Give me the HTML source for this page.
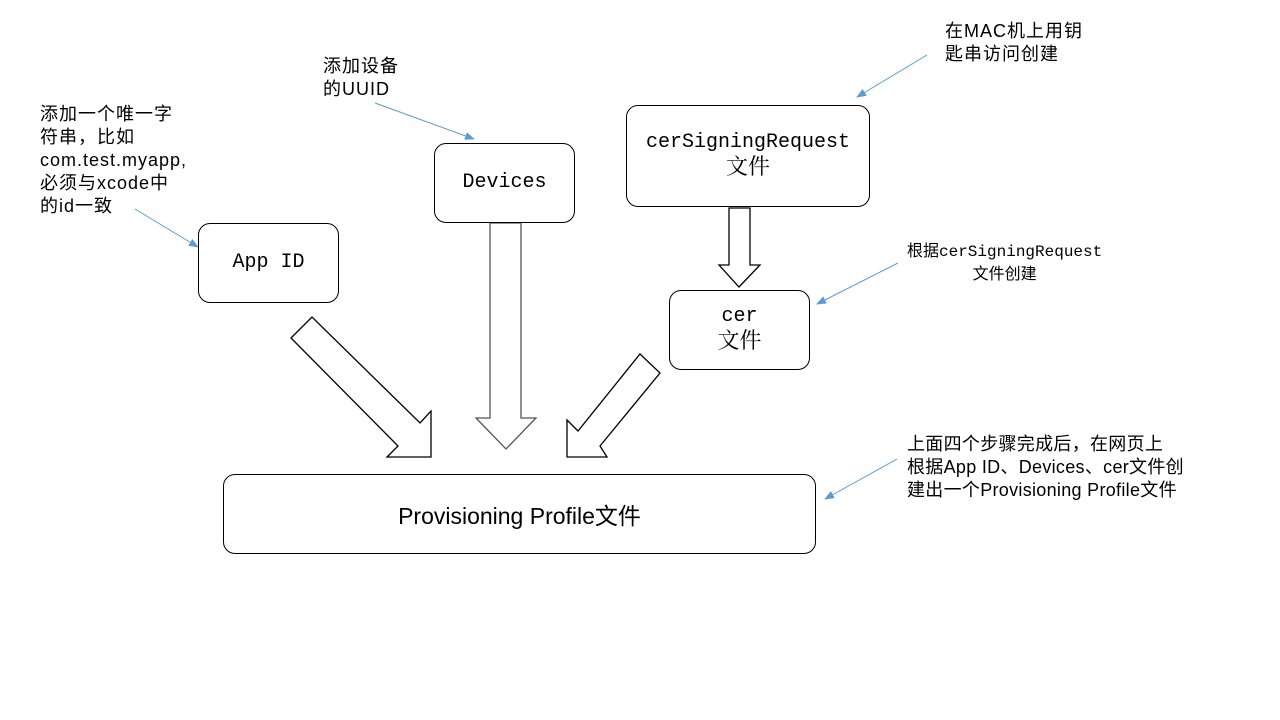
<!DOCTYPE html>
<html><head><meta charset="utf-8"><style>
body{margin:0;width:1280px;height:720px;background:#fff;position:relative;overflow:hidden}
.t{position:absolute;font:18px/23px "Liberation Sans","Noto Sans CJK SC",sans-serif;letter-spacing:1px;color:#000;white-space:nowrap}
.m{position:absolute;font:20px/26px "Liberation Mono","Noto Serif CJK SC",monospace;color:#000;text-align:center;white-space:nowrap}
.m .c{font-size:22px}
.b{position:absolute;border:1px solid #000;border-radius:12px;box-sizing:border-box;display:flex;align-items:center;justify-content:center;flex-direction:column}
</style></head><body>
<svg width="1280" height="720" style="position:absolute;left:0;top:0">
<defs><marker id="a" markerWidth="10" markerHeight="8" refX="9" refY="4" orient="auto" markerUnits="userSpaceOnUse"><path d="M0,0 L10,4 L0,8 z" fill="#5b9bd5"/></marker></defs>
<g stroke="#5b9bd5" stroke-width="1" marker-end="url(#a)">
<line x1="135" y1="209" x2="198" y2="247"/>
<line x1="375" y1="103" x2="474" y2="139"/>
<line x1="927" y1="55" x2="857" y2="97"/>
<line x1="898" y1="263" x2="817" y2="304"/>
<line x1="897" y1="459" x2="825" y2="499"/>
</g>
<g fill="#fff" stroke="#000" stroke-width="1.3">
<polygon points="291,338 312,317 420,423 431,411 431,457 387,457 398,446"/>
<polygon points="490,223 521,223 521,418 536,418 506,449 476,418 490,418" stroke="#555"/>
<polygon points="640,354 660,373 600,446 607,457 567,457 567,420 578,431"/>
<polygon points="729,208 750,208 750,265 760,265 739,287 719,265 729,265"/>
</g>
</svg>
<div class="b" style="left:198px;top:223px;width:141px;height:80px"><div class="m" style="position:static">App ID</div></div>
<div class="b" style="left:434px;top:143px;width:141px;height:80px"><div class="m" style="position:static">Devices</div></div>
<div class="b" style="left:626px;top:105px;width:244px;height:102px"><div class="m" style="position:static">cerSigningRequest<br><span class="c">文件</span></div></div>
<div class="b" style="left:669px;top:290px;width:141px;height:80px"><div class="m" style="position:static">cer<br><span class="c">文件</span></div></div>
<div class="b" style="left:223px;top:474px;width:593px;height:80px"><div style="font:23px 'Liberation Sans','Noto Sans CJK SC',sans-serif">Provisioning Profile文件</div></div>
<div class="t" style="left:40px;top:103px">添加一个唯一字<br>符串，比如<br>com.test.myapp,<br>必须与xcode中<br>的id一致</div>
<div class="t" style="left:323px;top:55px">添加设备<br>的UUID</div>
<div class="t" style="left:945px;top:20px">在MAC机上用钥<br>匙串访问创建</div>
<div class="t" style="left:907px;top:241px;text-align:center;letter-spacing:0;font-family:'Liberation Mono','Noto Sans CJK SC',monospace;font-size:16px">根据cerSigningRequest<br>文件创建</div>
<div class="t" style="left:907px;top:433px;letter-spacing:0.3px">上面四个步骤完成后，在网页上<br>根据App ID、Devices、cer文件创<br>建出一个Provisioning Profile文件</div>
</body></html>
